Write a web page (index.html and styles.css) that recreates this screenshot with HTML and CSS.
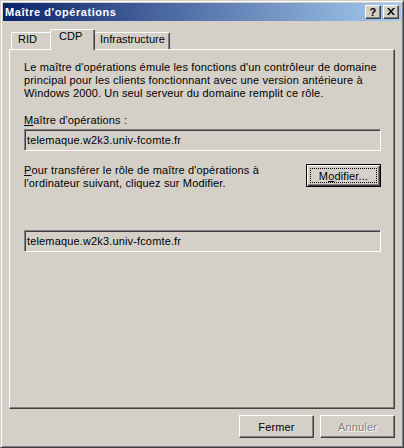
FILE: index.html
```html
<!DOCTYPE html>
<html lang="fr">
<head>
    <meta charset="UTF-8">
    <title>Maître d'opérations</title>
    <link rel="stylesheet" href="styles.css">
</head>
<body>
    <!-- fenêtre de dialogue -->
    <div class="window">
        <div class="titlebar">
            <span class="title">Maître d'opérations</span>
            <div class="caption-buttons">
                <span class="cap-btn help">?</span>
                <span class="cap-btn close">
                    <svg width="8" height="7" viewBox="0 0 8 7">
                        <path d="M0 0h2l2 2.5L6 0h2L5 3.5 8 7H6L4 4.5 2 7H0l3-3.5z" fill="#000"/>
                    </svg>
                </span>
            </div>
        </div>

        <div class="dialog-body">
            <!-- onglets -->
            <div class="tabs">
                <div class="tab">RID</div>
                <div class="tab active">CDP</div>
                <div class="tab">Infrastructure</div>
            </div>

            <!-- contenu de l'onglet CDP -->
            <div class="panel">
                <p class="desc">
                    Le maître d'opérations émule les fonctions d'un contrôleur de domaine<br>
                    principal pour les clients fonctionnant avec une version antérieure à<br>
                    Windows 2000. Un seul serveur du domaine remplit ce rôle.
                </p>
                <label class="field-label"><u>M</u>aître d'opérations :</label>
                <div class="field">telemaque.w2k3.univ-fcomte.fr</div>

                <div class="transfer">
                    <p><u>P</u>our transférer le rôle de maître d'opérations à<br>l'ordinateur suivant, cliquez sur Modifier.</p>
                    <button class="btn default"><span class="focus">M<u>o</u>difier...</span></button>
                </div>

                <div class="field target">telemaque.w2k3.univ-fcomte.fr</div>
            </div>

            <!-- boutons du bas -->
            <div class="actions">
                <button class="btn">Fermer</button>
                <button class="btn" disabled>Annuler</button>
            </div>
        </div>
    </div>
</body>
</html>
```

FILE: styles.css
```css
/* base */
body {
    margin: 0;
    background-color: #d4d0c8;
    font-family: 'Liberation Sans', Arial, sans-serif;
    font-size: 11px;
    letter-spacing: 0.15px;
    color: #000;
}

/* fenêtre */
.window {
    width: 404px;
    height: 448px;
    box-sizing: border-box;
    display: flex;
    flex-direction: column;
    border: 1px solid;
    border-color: #d4d0c8 #404040 #404040 #d4d0c8;
    box-shadow: inset 1px 1px #fff, inset -1px -1px #808080;
    padding: 2px;
    background-color: #d4d0c8;
}

/* barre de titre */
.titlebar {
    height: 18px;
    flex-shrink: 0;
    display: flex;
    align-items: center;
    justify-content: space-between;
    padding-left: 2px;
    background: linear-gradient(to right, #0a246a, #a6caf0);
}

.titlebar .title {
    color: #fff;
    font-weight: bold;
    font-size: 11px;
    letter-spacing: 0.55px;
    white-space: nowrap;
}

.caption-buttons {
    display: flex;
    gap: 2px;
    margin-right: 2px;
}

.cap-btn {
    width: 16px;
    height: 14px;
    box-sizing: border-box;
    display: flex;
    align-items: center;
    justify-content: center;
    background-color: #d4d0c8;
    border: 1px solid;
    border-color: #fff #404040 #404040 #fff;
    box-shadow: inset -1px -1px #808080;
}

.cap-btn.help {
    font-weight: bold;
    font-size: 11px;
    line-height: 12px;
    padding-bottom: 1px;
}

.cap-btn.close svg {
    display: block;
    margin-bottom: 1px;
}

/* corps */
.dialog-body {
    flex: 1;
    display: flex;
    flex-direction: column;
    padding: 8px 6px 7px;
}

/* onglets */
.tabs {
    height: 20px;
    display: flex;
    align-items: flex-end;
    padding-left: 2px;
}

.tab {
    position: relative;
    height: 17px;
    min-width: 41px;
    box-sizing: border-box;
    padding: 0 4px 0 6px;
    line-height: 13px;
    letter-spacing: 0;
    border-left: 1px solid #fff;
    border-top: 1px solid #fff;
    border-right: 1px solid #404040;
    border-radius: 2px 2px 0 0;
    box-shadow: inset -1px 0 #808080;
    background-color: #d4d0c8;
}

.tab.active {
    height: 21px;
    margin: 0 -2px -1px;
    padding: 0 6px 0 8px;
    min-width: 45px;
    z-index: 1;
}

/* panneau */
.panel {
    flex: 1;
    box-sizing: border-box;
    padding: 11px 13px 0 14px;
    border: 1px solid;
    border-color: #fff #404040 #404040 #fff;
    box-shadow: inset -1px -1px #808080;
}

.panel p {
    margin: 0;
    line-height: 13px;
    white-space: nowrap;
}

.field-label {
    display: block;
    margin-top: 14px;
    line-height: 13px;
}

.field {
    height: 22px;
    box-sizing: border-box;
    margin-top: 2px;
    padding-left: 2px;
    display: flex;
    align-items: center;
    border: 1px solid;
    border-color: #808080 #fff #fff #808080;
    box-shadow: inset 1px 1px #404040, inset -1px -1px #d4d0c8;
    white-space: nowrap;
}

.field.target {
    margin-top: 40px;
}

.transfer {
    display: flex;
    justify-content: space-between;
    align-items: flex-start;
    margin-top: 13px;
}

/* boutons */
.btn {
    width: 75px;
    height: 23px;
    box-sizing: border-box;
    padding: 0;
    font-family: inherit;
    font-size: 11px;
    letter-spacing: inherit;
    color: #000;
    background-color: #d4d0c8;
    border: 1px solid;
    border-color: #fff #404040 #404040 #fff;
    box-shadow: inset -1px -1px #808080;
    border-radius: 0;
}

.btn.default {
    border: 1px solid #000;
    box-shadow: inset 1px 1px #fff, inset -1px -1px #404040, inset -2px -2px #808080;
    padding: 3px;
}

.btn .focus {
    display: flex;
    height: 100%;
    align-items: center;
    justify-content: center;
    outline: 1px dotted #000;
    outline-offset: -1px;
}

.btn:disabled {
    color: #808080;
    text-shadow: 1px 1px #fff;
}

.actions {
    display: flex;
    justify-content: flex-end;
    gap: 6px;
    margin-top: 6px;
}
```
